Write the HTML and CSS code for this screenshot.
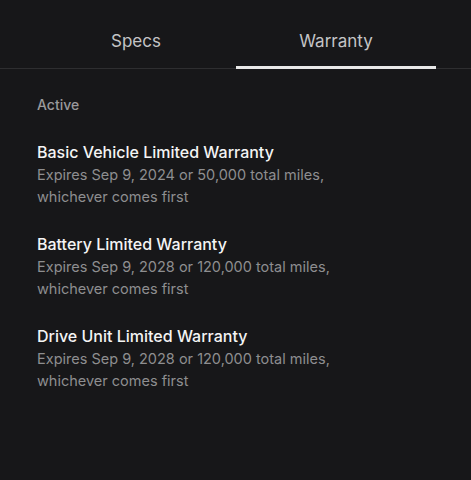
FILE: index.html
```html
<!DOCTYPE html>
<html lang="en">
<head>
    <meta charset="UTF-8">
    <meta name="viewport" content="width=device-width, initial-scale=1.0">
    <title>Warranty</title>
    <link rel="stylesheet" href="styles.css">
</head>
<body>
    <div class="tabs">
        <div class="tab">Specs</div>
        <div class="tab active">Warranty</div>
    </div>

    <div class="content">
        <div class="status">Active</div>

        <div class="warranty">
            <div class="warranty-title">Basic Vehicle Limited Warranty</div>
            <div class="warranty-desc">Expires Sep 9, 2024 or 50,000 total miles, whichever comes first</div>
        </div>

        <div class="warranty">
            <div class="warranty-title">Battery Limited Warranty</div>
            <div class="warranty-desc">Expires Sep 9, 2028 or 120,000 total miles, whichever comes first</div>
        </div>

        <div class="warranty">
            <div class="warranty-title">Drive Unit Limited Warranty</div>
            <div class="warranty-desc">Expires Sep 9, 2028 or 120,000 total miles, whichever comes first</div>
        </div>
    </div>
</body>
</html>
```

FILE: styles.css
```css
body {
    margin: 0;
    font-family: Inter, "Noto Sans", sans-serif;
    background-color: #171719;
    color: #ececec;
    height: 480px;
}

.tabs {
    display: flex;
    padding: 0 35px 0 36px;
    border-bottom: 1px solid #2e2e30;
}

.tab {
    flex: 1;
    height: 69px;
    padding-top: 16px;
    line-height: 50px;
    text-align: center;
    font-size: 17px;
    color: #c4c4c6;
    border-bottom: 3px solid transparent;
    box-sizing: border-box;
    margin-bottom: -1px;
}

.tab.active {
    border-bottom-color: #e8e8e8;
}

.content {
    padding: 27px 37px 0;
}

.status {
    font-size: 14px;
    font-weight: 500;
    color: #9a9a9c;
    line-height: 18px;
    margin-bottom: 27px;
}

.warranty {
    margin-bottom: 25px;
}

.warranty-title {
    font-size: 16px;
    font-weight: 500;
    line-height: 22px;
    color: #f4f4f4;
    margin-bottom: 1px;
}

.warranty-desc {
    font-size: 14.5px;
    line-height: 22px;
    color: #8e8e90;
    width: 300px;
}
```
